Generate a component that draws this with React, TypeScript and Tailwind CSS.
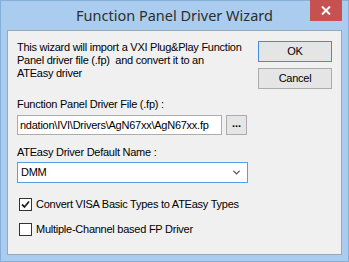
import { ChevronDown } from 'lucide-react';

function Check(props: { checked?: boolean, label: string }) {
  return (
    <label className="flex items-center gap-[4px] h-[13px] whitespace-nowrap">
      <span className="w-[13px] h-[13px] shrink-0 border border-[#333] bg-white flex items-center justify-center">
        {props.checked && (
          <svg width="9" height="9" viewBox="0 0 9 9">
            <path d="M1 4.5 L3.5 7 L8 1.5" stroke="#222" strokeWidth="1.8" fill="none" />
          </svg>
        )}
      </span>
      <span>{props.label}</span>
    </label>
  )
}

export default function App() {
  return (
    <div className="w-[349px] h-[262px] bg-[#aacdef] border border-[#86aed8] flex flex-col font-['Liberation_Sans',Arial,sans-serif] text-[11px] tracking-[-0.25px] text-black">
      <div className="relative h-[29px] flex items-center justify-center tracking-normal">
        <span className="font-['Noto_Sans',sans-serif] text-[14.5px] text-[#2e2e2e]">Function Panel Driver Wizard</span>
        <div className="absolute top-[-1px] right-[6px] w-[32px] h-[21px] bg-[#c75050] flex items-center justify-center">
          <svg width="10" height="9" viewBox="0 0 10 9">
            <path d="M1 0.5 L9 8.5 M9 0.5 L1 8.5" stroke="white" strokeWidth="2" />
          </svg>
        </div>
      </div>

      <div className="flex-1 mx-[6px] mb-[6px] border border-[#9aa7b4] bg-[#f0f0f0] flex pl-[9px] pr-[9px] pt-[10px]">
        <div className="w-[231px] flex flex-col">
          <p className="leading-[13px] whitespace-nowrap">
            This wizard will import a VXI Plug&amp;Play Function<br />
            Panel driver file (.fp)&nbsp; and convert it to an<br />
            ATEasy driver
          </p>

          <p className="mt-[18px] leading-[13px]">Function Panel Driver File (.fp) :</p>
          <div className="mt-[4px] flex items-center gap-[4px]">
            <div className="w-[205px] h-[20px] border border-[#acacac] bg-white flex items-center pl-[2px] overflow-hidden whitespace-nowrap">
              ndation\IVI\Drivers\AgN67xx\AgN67xx.fp
            </div>
            <button className="w-[21px] h-[20px] border border-[#acacac] bg-[#e5e5e5] flex items-center justify-center pb-[4px] font-bold tracking-normal">...</button>
          </div>

          <p className="mt-[11px] leading-[13px]">ATEasy Driver Default Name :</p>
          <div className="mt-[3px] h-[21px] border border-[#569de5] bg-white flex items-center justify-between pl-[3px] pr-[5px]">
            <span>DMM</span>
            <ChevronDown size={11} strokeWidth={3} className="text-[#555]" />
          </div>

          <div className="mt-[15px] flex flex-col gap-[12px] pl-[2px]">
            <Check checked label="Convert VISA Basic Types to ATEasy Types" />
            <Check label="Multiple-Channel based FP Driver" />
          </div>
        </div>

        <div className="ml-auto flex flex-col gap-[6px]">
          <button className="w-[74px] h-[21px] border border-[#3c8fe0] bg-[#e5e5e5]">OK</button>
          <button className="w-[74px] h-[21px] border border-[#acacac] bg-[#e5e5e5]">Cancel</button>
        </div>
      </div>
    </div>
  )
}
